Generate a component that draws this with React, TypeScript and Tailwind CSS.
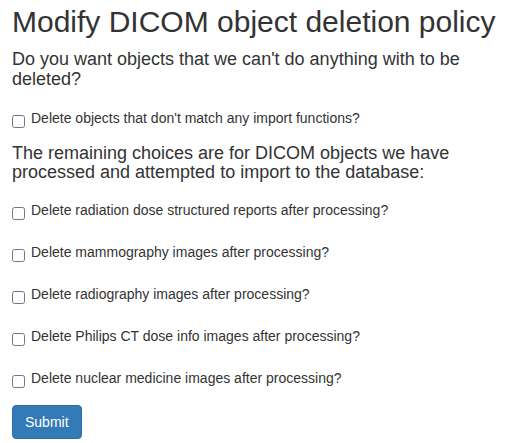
import React from 'react';

const options = [
  'Delete radiation dose structured reports after processing?',
  'Delete mammography images after processing?',
  'Delete radiography images after processing?',
  'Delete Philips CT dose info images after processing?',
  'Delete nuclear medicine images after processing?',
];

const CheckRow: React.FC<{ label: string; className?: string }> = ({ label, className }) => (
  <label className={`flex items-start text-[14px] leading-[20px] ${className ?? ''}`}>
    <input type="checkbox" className="mt-[7px] mr-[6px] h-[13px] w-[13px] shrink-0" />
    <span>{label}</span>
  </label>
);

export default function App() {
  return (
    <div className="px-3 pt-[5px] pb-4 text-[#333] font-['Liberation_Sans',Arial,sans-serif]">
      <h1 className="text-[30px] leading-[1.1] mb-3">Modify DICOM object deletion policy</h1>
      <form>
        <h4 className="text-[18px] leading-[1.1] mb-[18px]">
          Do you want objects that we can't do anything with to be deleted?
        </h4>
        <CheckRow label="Delete objects that don't match any import functions?" />
        <h4 className="text-[18px] leading-[1.1] mt-[16px] mb-[17px]">
          The remaining choices are for DICOM objects we have processed and attempted to import to the database:
        </h4>
        <div className="flex flex-col gap-[22px]">
          {options.map((o) => (
            <CheckRow key={o} label={o} />
          ))}
        </div>
        <button
          type="button"
          className="mt-[17px] rounded-[4px] border border-[#2e6da4] bg-[#337ab7] px-3 py-[6px] text-[14px] leading-[20px] text-white"
        >
          Submit
        </button>
      </form>
    </div>
  );
}
